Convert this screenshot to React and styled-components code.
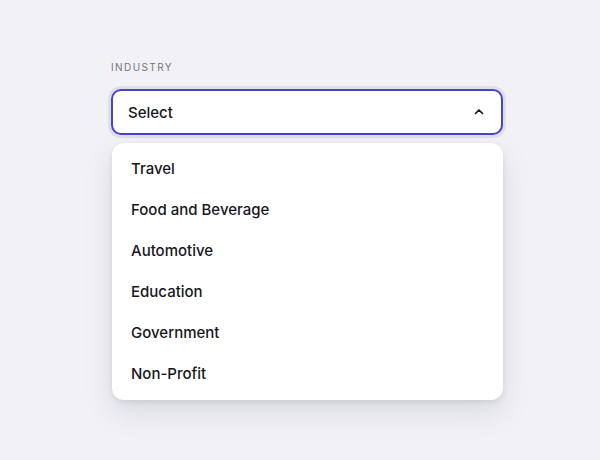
import React from "react";
import styled, { createGlobalStyle } from "styled-components";

const GlobalStyle = createGlobalStyle`
  html, body {
    margin: 0;
    padding: 0;
    background: #f2f2f6;
    font-family: "Inter", "Liberation Sans", sans-serif;
  }
`;

const options = [
  "Travel",
  "Food and Beverage",
  "Automotive",
  "Education",
  "Government",
  "Non-Profit",
];

export default function App() {
  return (
    <>
      <GlobalStyle />
      <Page>
        <Field>
          <Label>Industry</Label>
          <Trigger type="button">
            <span>Select</span>
            <Chevron width="12" height="12" viewBox="0 0 12 12">
              <path
                d="M2.5 7.5 L6 4 L9.5 7.5"
                fill="none"
                stroke="#16161c"
                strokeWidth="1.7"
                strokeLinecap="round"
                strokeLinejoin="round"
              />
            </Chevron>
          </Trigger>
          <Menu>
            {options.map((o) => (
              <Option key={o}>{o}</Option>
            ))}
          </Menu>
        </Field>
      </Page>
    </>
  );
}

const Page = styled.div`
  width: 600px;
  height: 460px;
  display: flex;
  padding: 61px 0 0 111px;
  box-sizing: border-box;
`;

const Field = styled.div`
  width: 392px;
  display: flex;
  flex-direction: column;
`;

const Label = styled.div`
  font-size: 10px;
  font-weight: 400;
  letter-spacing: 1.4px;
  text-transform: uppercase;
  color: #75757f;
  line-height: 12px;
  margin-bottom: 16px;
`;

const Trigger = styled.button`
  height: 46px;
  width: 100%;
  display: flex;
  align-items: center;
  justify-content: space-between;
  padding: 0 16px 0 15px;
  box-sizing: border-box;
  background: #fff;
  border: 2px solid #4744d0;
  border-radius: 10px;
  box-shadow: 0 0 0 3px #dfdfe8;
  font-family: inherit;
  font-size: 15px;
  font-weight: 500;
  color: #16161c;
  cursor: pointer;
`;

const Chevron = styled.svg`
  display: block;
`;

const Menu = styled.ul`
  list-style: none;
  margin: 8px 0 0 1px;
  padding: 5px 0 6px;
  background: #fff;
  border-radius: 12px;
  box-shadow: 0 12px 30px rgba(60, 60, 100, 0.14), 0 2px 5px rgba(60, 60, 100, 0.1);
`;

const Option = styled.li`
  height: 41px;
  display: flex;
  align-items: center;
  padding: 0 19px;
  font-size: 15px;
  font-weight: 500;
  color: #16161c;
  cursor: pointer;
`;
